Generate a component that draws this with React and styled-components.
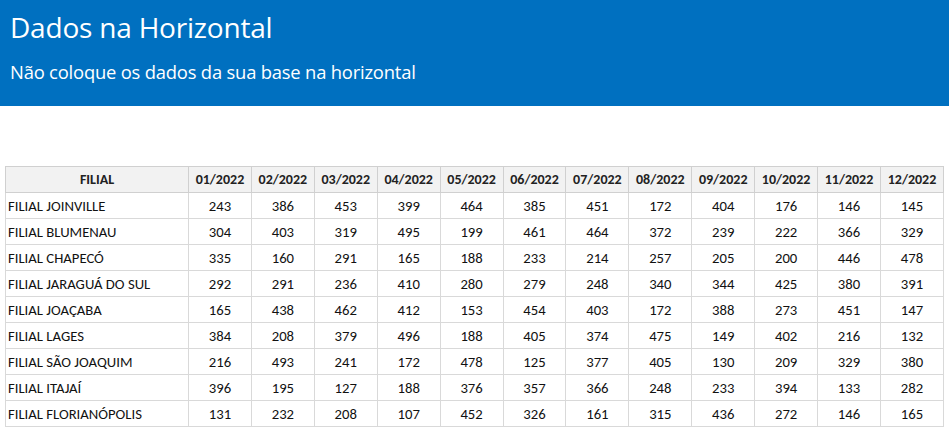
import React from "react";
import styled, { createGlobalStyle } from "styled-components";

const GlobalStyle = createGlobalStyle`
  html, body {
    margin: 0;
    padding: 0;
    background: #ffffff;
  }
  body {
    font-family: "Open Sans", "Noto Sans", sans-serif;
  }
`;

const Banner = styled.header`
  background: #0070c0;
  color: #ffffff;
  height: 106px;
  box-sizing: border-box;
  padding: 8px 0 0 10px;
`;

const Title = styled.h1`
  margin: 0;
  font-family: "Open Sans", "Noto Sans", sans-serif;
  font-weight: 400;
  font-size: 28px;
  line-height: 38px;
  letter-spacing: -0.2px;
`;

const Subtitle = styled.p`
  margin: 13px 0 0 0;
  font-size: 18.4px;
  line-height: 26px;
  letter-spacing: -0.2px;
`;

const TableWrap = styled.div`
  padding: 60px 0 0 5px;
`;

const Sheet = styled.table`
  border-collapse: collapse;
  table-layout: fixed;
  width: 939px;
  font-family: Calibri, Carlito, "Liberation Sans", sans-serif;
  font-size: 14.7px;
  color: #111111;
`;

const HeadCell = styled.th`
  background: #f2f2f2;
  border: 1px solid #d0d0d0;
  height: 25px;
  padding: 0;
  font-size: 14px;
  font-weight: 700;
  color: #222222;
  text-align: center;
  white-space: nowrap;
  width: ${(p) => (p.$wide ? "182px" : "auto")};
`;

const Cell = styled.td`
  border: 1px solid #d9d9d9;
  height: 25px;
  padding: 0 ${(p) => (p.$left ? "2px" : "0")};
  text-align: ${(p) => (p.$left ? "left" : "center")};
  white-space: nowrap;
`;

const months = [
  "01/2022", "02/2022", "03/2022", "04/2022", "05/2022", "06/2022",
  "07/2022", "08/2022", "09/2022", "10/2022", "11/2022", "12/2022",
];

const rows = [
  ["FILIAL JOINVILLE", 243, 386, 453, 399, 464, 385, 451, 172, 404, 176, 146, 145],
  ["FILIAL BLUMENAU", 304, 403, 319, 495, 199, 461, 464, 372, 239, 222, 366, 329],
  ["FILIAL CHAPECÓ", 335, 160, 291, 165, 188, 233, 214, 257, 205, 200, 446, 478],
  ["FILIAL JARAGUÁ DO SUL", 292, 291, 236, 410, 280, 279, 248, 340, 344, 425, 380, 391],
  ["FILIAL JOAÇABA", 165, 438, 462, 412, 153, 454, 403, 172, 388, 273, 451, 147],
  ["FILIAL LAGES", 384, 208, 379, 496, 188, 405, 374, 475, 149, 402, 216, 132],
  ["FILIAL SÃO JOAQUIM", 216, 493, 241, 172, 478, 125, 377, 405, 130, 209, 329, 380],
  ["FILIAL ITAJAÍ", 396, 195, 127, 188, 376, 357, 366, 248, 233, 394, 133, 282],
  ["FILIAL FLORIANÓPOLIS", 131, 232, 208, 107, 452, 326, 161, 315, 436, 272, 146, 165],
];

export default function App() {
  return (
    <>
      <GlobalStyle />
      <Banner>
        <Title>Dados na Horizontal</Title>
        <Subtitle>Não coloque os dados da sua base na horizontal</Subtitle>
      </Banner>
      <TableWrap>
        <Sheet>
          <thead>
            <tr>
              <HeadCell $wide>FILIAL</HeadCell>
              {months.map((m) => (
                <HeadCell key={m}>{m}</HeadCell>
              ))}
            </tr>
          </thead>
          <tbody>
            {rows.map(([name, ...values]) => (
              <tr key={name}>
                <Cell $left>{name}</Cell>
                {values.map((v, i) => (
                  <Cell key={i}>{v}</Cell>
                ))}
              </tr>
            ))}
          </tbody>
        </Sheet>
      </TableWrap>
    </>
  );
}
